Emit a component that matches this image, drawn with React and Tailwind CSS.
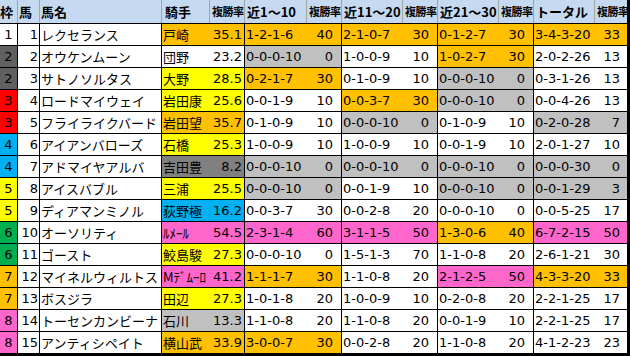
import React from "react";

const WAKU = {
  1: "bg-white",
  2: "bg-[#606060]",
  3: "bg-[#ff0000]",
  4: "bg-[#00b0f0]",
  5: "bg-[#ffff00]",
  6: "bg-[#00b050]",
  7: "bg-[#ffc000]",
  8: "bg-[#ff66cc]",
};

const BG = {
  o: "bg-[#ffc000]",
  y: "bg-[#ffff00]",
  g: "bg-[#c0c0c0]",
  d: "bg-[#808080]",
  b: "bg-[#00b0f0]",
  p: "bg-[#ff66cc]",
  w: "bg-white",
};

const rows = [
  [1, 1, "レクセランス", ["戸崎", "35.1", "o"], ["1-2-1-6", "40", "o"], ["2-1-0-7", "30", "o"], ["0-1-2-7", "30", "o"], ["3-4-3-20", "33", "o"]],
  [2, 2, "オウケンムーン", ["団野", "23.2", "w"], ["0-0-0-10", "0", "g"], ["1-0-0-9", "10", "w"], ["1-0-2-7", "30", "o"], ["2-0-2-26", "13", "w"]],
  [2, 3, "サトノソルタス", ["大野", "28.5", "y"], ["0-2-1-7", "30", "o"], ["0-1-0-9", "10", "w"], ["0-0-0-10", "0", "g"], ["0-3-1-26", "13", "w"]],
  [3, 4, "ロードマイウェイ", ["岩田康", "25.6", "y"], ["0-0-1-9", "10", "w"], ["0-0-3-7", "30", "o"], ["0-0-0-10", "0", "g"], ["0-0-4-26", "13", "w"]],
  [3, 5, "フライライクバード", ["岩田望", "35.7", "o"], ["0-1-0-9", "10", "w"], ["0-0-0-10", "0", "g"], ["0-1-0-9", "10", "w"], ["0-2-0-28", "7", "g"]],
  [4, 6, "アイアンバローズ", ["石橋", "25.3", "y"], ["1-0-0-9", "10", "w"], ["1-0-0-9", "10", "w"], ["0-0-1-9", "10", "w"], ["2-0-1-27", "10", "w"]],
  [4, 7, "アドマイヤアルバ", ["吉田豊", "8.2", "d"], ["0-0-0-10", "0", "g"], ["0-0-0-10", "0", "g"], ["0-0-0-10", "0", "g"], ["0-0-0-30", "0", "g"]],
  [5, 8, "アイスバブル", ["三浦", "25.5", "y"], ["0-0-0-10", "0", "g"], ["0-0-1-9", "10", "w"], ["0-0-0-10", "0", "g"], ["0-0-1-29", "3", "g"]],
  [5, 9, "ディアマンミノル", ["荻野極", "16.2", "b"], ["0-0-3-7", "30", "w"], ["0-0-2-8", "20", "w"], ["0-0-0-10", "0", "w"], ["0-0-5-25", "17", "w"]],
  [6, 10, "オーソリティ", ["ﾙﾒｰﾙ", "54.5", "p"], ["2-3-1-4", "60", "p"], ["3-1-1-5", "50", "p"], ["1-3-0-6", "40", "o"], ["6-7-2-15", "50", "p"]],
  [6, 11, "ゴースト", ["鮫島駿", "27.3", "y"], ["0-0-0-10", "0", "w"], ["1-5-1-3", "70", "w"], ["1-1-0-8", "20", "w"], ["2-6-1-21", "30", "w"]],
  [7, 12, "マイネルウィルトス", ["Mﾃﾞﾑｰﾛ", "41.2", "p"], ["1-1-1-7", "30", "o"], ["1-1-0-8", "20", "w"], ["2-1-2-5", "50", "p"], ["4-3-3-20", "33", "o"]],
  [7, 13, "ボスジラ", ["田辺", "27.3", "y"], ["1-0-1-8", "20", "w"], ["1-0-0-9", "10", "w"], ["0-2-0-8", "20", "w"], ["2-2-1-25", "17", "w"]],
  [8, 14, "トーセンカンビーナ", ["石川", "13.3", "g"], ["1-1-0-8", "20", "w"], ["1-1-0-8", "20", "w"], ["0-0-1-9", "10", "w"], ["2-2-1-25", "17", "w"]],
  [8, 15, "アンティシペイト", ["横山武", "33.9", "o"], ["3-0-0-7", "30", "o"], ["0-0-2-8", "20", "w"], ["1-1-0-8", "20", "w"], ["4-1-2-23", "23", "w"]],
];

const JP = "font-['Noto_Sans_CJK_JP','Noto_Sans',sans-serif]";
const NUM = "font-['DejaVu_Sans','Noto_Sans_CJK_JP',sans-serif]";

const groupW = [
  ["w-[48px]", "w-[35px]", "pr-[2px]"],
  ["w-[62px]", "w-[35px]", "pr-[8px]"],
  ["w-[61px]", "w-[35px]", "pr-[8px]"],
  ["w-[61px]", "w-[35px]", "pr-[8px]"],
  ["w-[61px]", "w-[35px]", "pr-[7px]"],
];

function Header() {
  const hb = "h-full flex items-center border-r border-[#a3a3a3] font-bold leading-none text-black whitespace-nowrap overflow-hidden";
  const rate = (last) => (
    <div className={`w-[35px] ${hb} ${last ? "border-r-[3px] border-r-black" : ""} pl-[2px] text-[11px] tracking-[-0.5px]`}>
      複勝率
    </div>
  );
  return (
    <div className={`flex h-[24px] bg-[#c5d9f1] border-b border-black ${JP} text-[13px]`}>
      <div className={`w-[18px] ${hb}`}>枠</div>
      <div className={`w-[22px] ${hb} pl-[1px]`}>馬</div>
      <div className={`w-[122px] ${hb} pl-[1px]`}>馬名</div>
      <div className={`w-[48px] ${hb} pl-[3px]`}>騎手</div>
      {rate()}
      <div className={`w-[62px] ${hb} pl-[2px]`}>近1～10</div>
      {rate()}
      <div className={`w-[61px] ${hb} pl-[2px]`}>近11～20</div>
      {rate()}
      <div className={`w-[61px] ${hb} pl-[2px]`}>近21～30</div>
      {rate()}
      <div className={`w-[61px] ${hb} pl-[2px]`}>トータル</div>
      {rate(true)}
    </div>
  );
}

function Row({ r, last }) {
  const [waku, num, name, ...groups] = r;
  const cell = "h-full flex items-center leading-none text-black";
  return (
    <div className={`flex ${last ? "h-[24px] border-b-[3px]" : "h-[22px] border-b"} border-black`}>
      <div className={`w-[18px] ${cell} justify-center border-r border-black ${WAKU[waku]} ${NUM} text-[13px] ${waku === 2 ? "text-[#1a1a1a]" : ""}`}>
        {waku}
      </div>
      <div className={`w-[22px] ${cell} justify-end pr-[1px] border-r border-black bg-white ${NUM} text-[13px]`}>
        {num}
      </div>
      <div className={`w-[122px] ${cell} pl-[1px] border-r border-black bg-white ${JP} text-[13px] whitespace-nowrap overflow-hidden`}>
        {name}
      </div>
      {groups.map((g, i) => {
        const [a, b, c] = g;
        const bg = BG[c];
        const isLast = i === groups.length - 1;
        const isJockey = i === 0;
        return (
          <React.Fragment key={i}>
            <div
              className={`${groupW[i][0]} ${cell} ${bg} whitespace-nowrap overflow-hidden text-[13px] ${
                isJockey ? `${JP} pl-[1px]` : `${NUM} pl-[1px]`
              }`}
            >
              {a}
            </div>
            <div
              className={`${groupW[i][1]} ${cell} ${bg} justify-end ${groupW[i][2]} ${NUM} text-[13px] ${
                isLast ? "border-r-[3px]" : "border-r"
              } border-black`}
            >
              {b}
            </div>
          </React.Fragment>
        );
      })}
    </div>
  );
}

export default function App() {
  return (
    <div className="w-[630px] h-[356px] bg-white overflow-hidden">
      <Header />
      {rows.map((r, i) => (
        <Row key={i} r={r} last={i === rows.length - 1} />
      ))}
    </div>
  );
}
